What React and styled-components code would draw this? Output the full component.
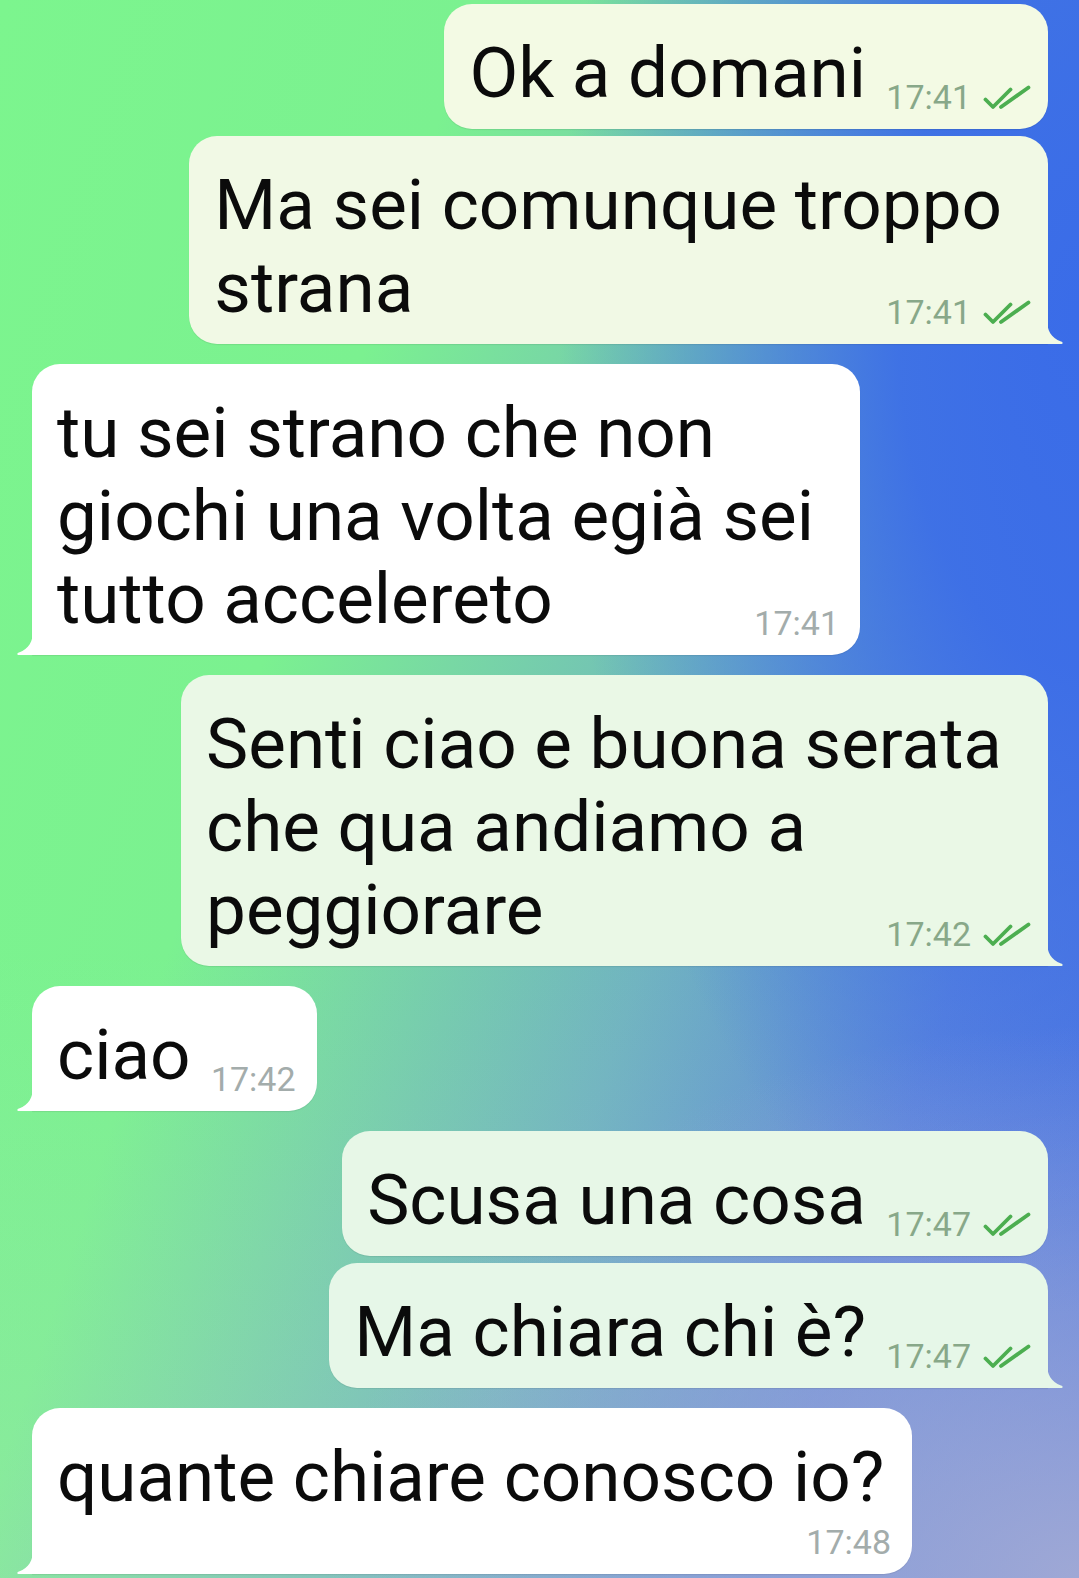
import React from 'react';
import styled, { createGlobalStyle } from 'styled-components';

const GlobalStyle = createGlobalStyle`
  html, body {
    margin: 0;
    padding: 0;
  }
  body {
    font-family: Roboto, "Noto Sans", "Liberation Sans", sans-serif;
    -webkit-font-smoothing: antialiased;
  }
`;

// --- Styled Components ---
const Screen = styled.div`
  width: 1079px;
  height: 1578px;
  overflow: hidden;
  box-sizing: border-box;
  padding-top: 4px;
  display: flex;
  flex-direction: column;
  background:
    radial-gradient(ellipse 70% 35% at 100% 100%, rgba(165, 172, 212, 0.9) 0%, rgba(165, 172, 212, 0) 100%),
    radial-gradient(ellipse 520px 1000px at 100% 20%, #3a6ce8 0%, rgba(58, 108, 232, 0.9) 35%, rgba(58, 108, 232, 0) 100%),
    linear-gradient(to bottom, rgba(255, 255, 255, 0) 60%, rgba(200, 205, 215, 0.2) 100%),
    linear-gradient(108deg, #7cf58e 0%, #7bf190 30%, #78d8a4 42%, #70b4c0 60%, #5a84dc 80%, #4a72e2 100%);
`;

const Row = styled.div`
  display: flex;
  justify-content: ${({ $out }) => ($out ? 'flex-end' : 'flex-start')};
  padding: 0 31px 0 32px;
  margin-top: ${({ $grouped }) => ($grouped ? '7px' : '20px')};

  &:first-child {
    margin-top: 0;
  }
`;

const Bubble = styled.div`
  position: relative;
  display: flow-root;
  width: fit-content;
  max-width: 880px;
  box-sizing: border-box;
  padding: 27px 22px 15px 25px;
  border-radius: 28px;
  background: ${({ $bg }) => $bg};
  box-shadow: 0 1px 1px rgba(0, 0, 0, 0.08);
  ${({ $tail, $out }) =>
    $tail && ($out ? 'border-bottom-right-radius: 0;' : 'border-bottom-left-radius: 0;')}
`;

const Text = styled.div`
  font-size: 71px;
  line-height: 83px;
  color: #0b0b0b;
  white-space: nowrap;
  padding-right: ${({ $multi }) => ($multi ? '24px' : '0')};
`;

const Line = styled.span`
  white-space: pre;
`;

const Spacer = styled.span`
  float: right;
  width: ${({ $out }) => ($out ? '160px' : '104px')};
  height: 41px;
`;

const Meta = styled.div`
  position: absolute;
  right: ${({ $out }) => ($out ? '17px' : '21px')};
  bottom: 15px;
  display: flex;
  align-items: center;
  gap: 12px;
  font-size: 34px;
  line-height: 34px;
  color: ${({ $out }) => ($out ? '#88a889' : '#a3acab')};
`;

const Tail = styled.svg`
  position: absolute;
  bottom: 0;
  ${({ $out }) => ($out ? 'right: -16px;' : 'left: -16px; transform: scaleX(-1);')}
`;

const Check = () => (
  <svg width="48" height="25" viewBox="0 0 48 25" fill="none">
    <path d="M2.5 14.5 L10 22 L27.5 4.5" stroke="#4cae50" strokeWidth="3.8" strokeLinecap="round" strokeLinejoin="round" />
    <path d="M18 22 L45.5 2.5" stroke="#4cae50" strokeWidth="3.8" strokeLinecap="round" />
  </svg>
);

const messages = [
  { id: 1, out: true, lines: ['Ok a domani'], time: '17:41', bg: '#f3fae4' },
  { id: 2, out: true, lines: ['Ma sei comunque troppo', 'strana'], time: '17:41', tail: true, grouped: true, bg: '#f1f9e5' },
  { id: 3, out: false, lines: ['tu sei strano che non', 'giochi una volta egià sei', 'tutto accelereto'], time: '17:41', tail: true, bg: '#ffffff' },
  { id: 4, out: true, lines: ['Senti ciao e buona serata', 'che qua andiamo a', 'peggiorare'], time: '17:42', tail: true, bg: '#eaf8e6' },
  { id: 5, out: false, lines: ['ciao'], time: '17:42', tail: true, bg: '#ffffff' },
  { id: 6, out: true, lines: ['Scusa una cosa'], time: '17:47', bg: '#e7f7e7' },
  { id: 7, out: true, lines: ['Ma chiara chi è?'], time: '17:47', tail: true, grouped: true, bg: '#e6f7e8' },
  { id: 8, out: false, lines: ['quante chiare conosco io?'], time: '17:48', tail: true, bg: '#ffffff' },
];

function Message({ msg }) {
  const multi = msg.lines.length > 1;
  return (
    <Row $out={msg.out} $grouped={msg.grouped}>
      <Bubble $out={msg.out} $tail={msg.tail} $bg={msg.bg}>
        <Text $multi={multi}>
          {msg.lines.map((l, i) => (
            <React.Fragment key={i}>
              {i > 0 && <br />}
              <Line>{l}</Line>
            </React.Fragment>
          ))}
          <Spacer $out={msg.out} />
        </Text>
        <Meta $out={msg.out}>
          <span>{msg.time}</span>
          {msg.out && <Check />}
        </Meta>
        {msg.tail && (
          <Tail $out={msg.out} width="17" height="24" viewBox="0 0 17 24">
            <path d="M0 0 C0 10 4 18 14 21.5 C16.5 22.4 16 24 14 24 L0 24 Z" fill={msg.bg} />
          </Tail>
        )}
      </Bubble>
    </Row>
  );
}

export default function App() {
  return (
    <>
      <GlobalStyle />
      <Screen>
        {messages.map((m) => (
          <Message key={m.id} msg={m} />
        ))}
      </Screen>
    </>
  );
}
